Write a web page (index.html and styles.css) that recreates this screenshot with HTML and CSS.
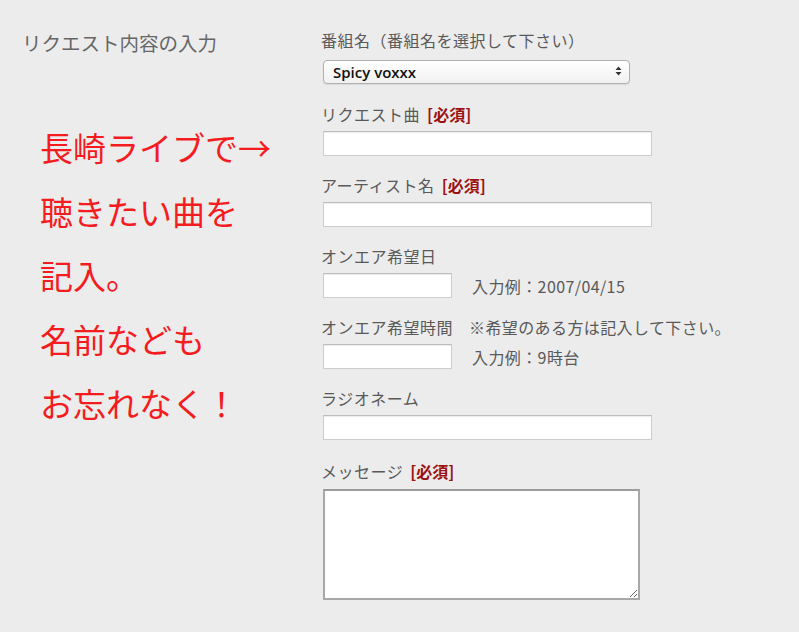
FILE: index.html
```html
<!DOCTYPE html>
<html lang="ja">
<head>
<meta charset="utf-8">
<title>リクエスト内容の入力</title>
<link rel="stylesheet" href="styles.css">
</head>
<body>
<div class="page">
  <div class="side">
    <h2 class="title">リクエスト内容の入力</h2>
    <p class="note">長崎ライブで→<br>聴きたい曲を<br>記入。<br>名前なども<br>お忘れなく！</p>
  </div>
  <form class="form">
    <div class="field">
      <label class="label">番組名（番組名を選択して下さい）</label>
      <div class="select-wrap">
        <select class="select"><option>Spicy voxxx</option></select>
        <svg class="arrows" width="7" height="10" viewBox="0 0 7 10"><path d="M3.5 0.5L6.5 4H0.5Z M3.5 9.5L6.5 6H0.5Z" fill="#333"/></svg>
      </div>
    </div>
    <div class="field">
      <label class="label">リクエスト曲 <b class="req">[必須]</b></label>
      <input class="input wide" type="text">
    </div>
    <div class="field">
      <label class="label">アーティスト名 <b class="req">[必須]</b></label>
      <input class="input wide" type="text">
    </div>
    <div class="field">
      <label class="label">オンエア希望日</label>
      <div class="row">
        <input class="input short" type="text">
        <span class="hint">入力例：2007/04/15</span>
      </div>
    </div>
    <div class="field">
      <label class="label">オンエア希望時間<span class="aside">※希望のある方は記入して下さい。</span></label>
      <div class="row">
        <input class="input short" type="text">
        <span class="hint">入力例：9時台</span>
      </div>
    </div>
    <div class="field">
      <label class="label">ラジオネーム</label>
      <input class="input wide" type="text">
    </div>
    <div class="field field-last">
      <label class="label">メッセージ <b class="req">[必須]</b></label>
      <textarea class="textarea"></textarea>
    </div>
  </form>
</div>
</body>
</html>
```

FILE: styles.css
```css
html, body {
  margin: 0;
  padding: 0;
  background: #ececec;
}
body {
  font-family: "Noto Sans CJK JP", "Noto Sans", sans-serif;
  color: #595959;
  width: 799px;
  height: 632px;
  overflow: hidden;
}
.page {
  display: flex;
  padding-top: 30px;
}
.side {
  width: 321px;
  padding-left: 22px;
  box-sizing: border-box;
}
.title {
  margin: 0;
  font-size: 19.5px;
  line-height: 26px;
  font-weight: normal;
  color: #666;
}
.note {
  margin: 59px 0 0 18px;
  font-size: 33px;
  line-height: 64px;
  color: #f41c1f;
}
.form {
  display: flex;
  flex-direction: column;
}
.field {
  display: flex;
  flex-direction: column;
  align-items: flex-start;
  margin-bottom: 19px;
}
.field:first-child {
  margin-bottom: 20px;
}
.field-last {
  margin-top: 2px;
}
.label {
  font-size: 16px;
  letter-spacing: 0.5px;
  line-height: 20px;
  color: #595959;
  margin-bottom: 7px;
  white-space: nowrap;
}
.field:first-child .label {
  margin-bottom: 9px;
}
.req {
  color: #9c1212;
  font-weight: bold;
  letter-spacing: 0;
  margin-left: 3px;
}
.aside {
  margin-left: 16px;
  font-size: 16px;
  letter-spacing: 0.4px;
}
.select-wrap {
  position: relative;
  margin-left: 2px;
}
.select {
  -webkit-appearance: none;
  appearance: none;
  width: 307px;
  height: 24px;
  box-sizing: border-box;
  border: 1px solid #b0b0b0;
  border-radius: 4px;
  background: linear-gradient(#ffffff, #f1f1f1);
  box-shadow: 0 1px 1px rgba(0,0,0,0.08);
  font-family: "Open Sans", "Noto Sans", sans-serif;
  font-size: 15px;
  font-weight: 600;
  color: #111;
  padding: 0 0 0 9px;
  line-height: 22px;
  outline: none;
}
.arrows {
  position: absolute;
  right: 8px;
  top: 7px;
}
.input {
  height: 25px;
  box-sizing: border-box;
  margin: 0 0 0 2px;
  border: 1px solid #cdcdcd;
  border-top-color: #bdbdbd;
  box-shadow: inset 0 1px 1px rgba(0,0,0,0.08);
  background: #fff;
  padding: 0 4px;
  outline: none;
}
.wide {
  width: 329px;
}
.short {
  width: 129px;
}
.row {
  display: flex;
  align-items: center;
  gap: 20px;
}
.hint {
  font-size: 16px;
  letter-spacing: 0.4px;
  color: #595959;
}
.textarea {
  margin: 1px 0 0 2px;
  width: 317px;
  height: 111px;
  box-sizing: border-box;
  border: 2px solid #a8a8a8;
  border-top-color: #9c9c9c;
  background: #fff;
  resize: both;
  outline: none;
}
```
